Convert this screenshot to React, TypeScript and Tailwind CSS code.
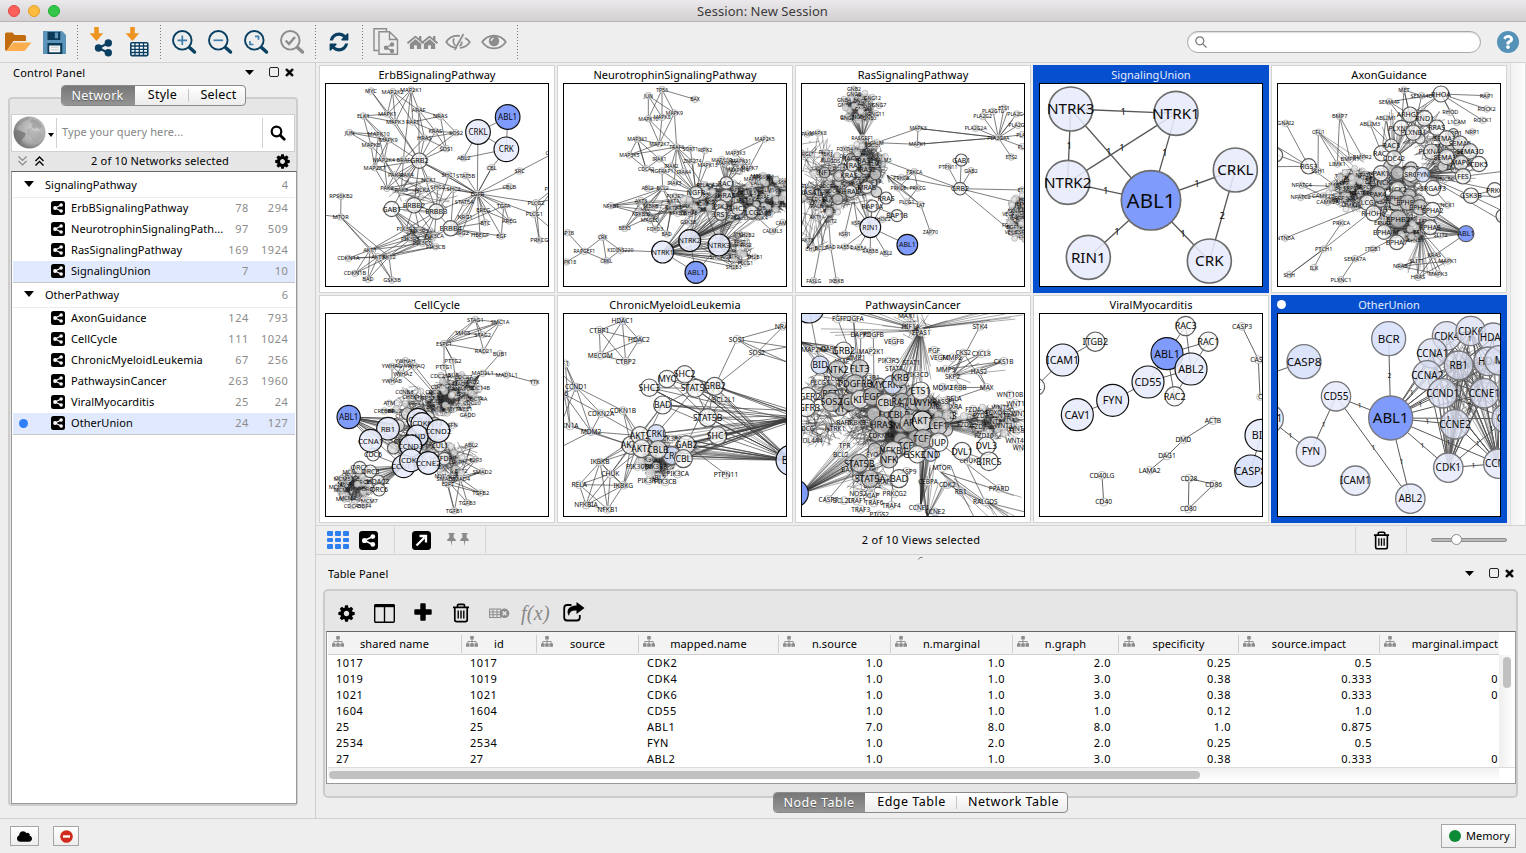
import React from "react";
import { FaCloud, FaHome, FaQuestion, FaTimes } from "react-icons/fa";

/* ---------- network thumbnails ---------- */

type Cloud = { at: [number, number]; size: [number, number]; edges: number; nodes?: number; names?: string; r?: number; tone?: string };
type Fan = { from: [number, number]; at: [number, number]; size: [number, number]; n: number };
type Graph = {
  title: string;
  origin: [number, number];
  nodes: string;
  links?: string;
  clouds?: Cloud[];
  fans?: Fan[];
  marks?: string;
  small?: number;
  mid?: number;
  k?: number;
  ring?: string;
  ringWidth?: number;
  line?: number;
  selected?: boolean;
  current?: boolean;
};

const tones: Record<string, string> = { w: "#f8f8f8", g: "#c9c9c9", l: "#e7ebfa", m: "#d6e0fb", b: "#7f9bfb", s: "#e6e6e6", v: "#dadff2" };

function rng(seed: number) {
  let a = seed;
  return () => {
    a = (a * 1664525 + 1013904223) % 4294967296;
    return a / 4294967296;
  };
}

function inEllipse(rand: () => number, at: [number, number], size: [number, number]): [number, number] {
  const t = rand() * Math.PI * 2;
  const d = Math.sqrt(rand());
  return [at[0] + Math.cos(t) * d * size[0], at[1] + Math.sin(t) * d * size[1]];
}

/* Each entry reads "label x y [radius] [tone]"; a label of "_" leaves the node blank. */
function parse(list: string) {
  return list.split(";").map((s) => s.trim()).filter(Boolean).map((s) => {
    const p = s.split(" ");
    return { label: p[0] === "_" ? "" : p[0], x: +p[1], y: +p[2], r: p[3] ? +p[3] : 10, tone: p[4] || (p[3] ? "w" : "s") };
  });
}

function NetworkDrawing({ g }: { g: Graph }) {
  const rand = rng(g.title.length * 7919 + g.origin[0]);
  const own = parse(g.nodes);
  const find = (t: string): [number, number] => {
    if (t.includes(",")) {
      const [x, y] = t.split(",");
      return [+x, +y];
    }
    const n = own.find((o) => o.label === t);
    return n ? [n.x, n.y] : [g.origin[0], g.origin[1]];
  };
  const lines: number[][] = [];
  const mesh: number[][] = [];
  (g.links || "").split(";").map((s) => s.trim()).filter(Boolean).forEach((s) => {
    const [a, ...rest] = s.split(" ");
    const p = find(a);
    rest.forEach((b) => lines.push([...p, ...find(b)]));
  });
  (g.fans || []).forEach((f) => {
    for (let i = 0; i < f.n; i++) mesh.push([...f.from, ...inEllipse(rand, f.at, f.size)]);
  });
  const extra: ReturnType<typeof parse> = [];
  (g.clouds || []).forEach((c) => {
    for (let i = 0; i < c.edges; i++) mesh.push([...inEllipse(rand, c.at, c.size), ...inEllipse(rand, c.at, c.size)]);
    const names = (c.names || "").split(" ");
    for (let i = 0; i < (c.nodes || 0); i++) {
      const [x, y] = inEllipse(rand, c.at, c.size);
      extra.push({ label: i % 2 ? "" : names[(i / 2) % names.length], x, y, r: c.r || 9, tone: c.tone || "s" });
    }
  });
  const small = g.small || 16;
  const mid = g.mid || 20;
  const k = g.k || 0.65;
  return (
    <svg className="block h-full w-full" viewBox={`${g.origin[0]} ${g.origin[1]} 672 612`} fontFamily="'Noto Sans', sans-serif" textAnchor="middle">
      <g stroke="#333" strokeOpacity="0.8" strokeWidth="1.500">
        {mesh.map((l, i) => (
          <line key={i} x1={l[0]} y1={l[1]} x2={l[2]} y2={l[3]} />
        ))}
      </g>
      <g stroke={g.ring ? "#585858" : "#3c3c3c"} strokeWidth={g.line || 2}>
        {lines.map((l, i) => (
          <line key={i} x1={l[0]} y1={l[1]} x2={l[2]} y2={l[3]} />
        ))}
      </g>
      {[...extra, ...own].map((n, i) => {
        const tiny = n.r <= 14;
        const size = tiny ? small : Math.max(mid, n.r * k);
        return (
          <g key={i}>
            <circle cx={n.x} cy={n.y} r={n.r} fill={tones[n.tone]} fillOpacity={n.tone === "b" ? 1 : n.tone === "l" || n.tone === "m" ? 0.88 : 0.76} stroke={tiny ? "#a2a2a2" : g.ring || (n.r > 29 ? "#111111" : "#5c5c5c")} strokeWidth={tiny ? 2 : g.ringWidth || 3.5} />
            {n.label && <text x={n.x} y={n.y + size * 0.36} fontSize={size} fill="#0a0a0a">{n.label}</text>}
          </g>
        );
      })}
      {parse(g.marks || "").map((m, i) => (
        <text key={i} x={m.x} y={m.y + m.r * 0.36} fontSize={m.r} fill="#111111">{m.label}</text>
      ))}
    </svg>
  );
}

const graphs: Graph[] = [
  {
    title: "ErbBSignalingPathway",
    origin: [27, 189],
    small: 17,
    mid: 22,
    nodes:
      "MYC 165 213;MAP2K2 230 215;MAP2K1 285 210;ELK1 142 288;MAPK1 214 282;ARAF 308 270;NRAS 373 289;MAPK3 238 306;RAF1 290 306;JUN 101 338;MAPK10 188 342;HRAS 325 354;KRAS 358 334;SOS2 420 338;MAPK9 217 360;MAPK8 165 376;SOS1 391 386;MAP2K4 204 419;BRAF 262 419;MAP2K7 176 443;ABL2 443 414 10 v;CBL 527 443;SRC 611 453;PAK1 236 465;PAK4 273 465;NCK1 338 480;SHC1 398 465;STAT5B 449 467;PAK2 213 505;PAK3 256 511;NCK2 318 511;SHC3 365 502;SHC2 413 508;EGFR 484 521;CBLB 580 500;RPS6KB2 75 529;MTOR 74 591;STAT5A 445 547;EREG 502 570;TGFA 563 558;NRG1 447 591;BTC 508 608;HBEGF 492 646;EGF 556 648;AREG 580 603;NRG2 436 640;PIK3R1 270 628;PIK3R3 310 632;PIK3CA 355 647;PIK3R5 283 657;PIK3CD 320 670;PIK3CB 359 680;AKT1 162 690;AKT3 186 710;AKT2 219 710;CDKN1A 97 715;CDKN1B 117 760;BAD 156 778;GSK3B 228 780;PLCG2 660 548;PLCG1 655 583;PRKCG 670 660;PRKCA 712 507;CAMK 712 400;GAB1 227 567 23;ERBB2 294 556 23;ERBB3 361 575 23;ERBB4 404 625 23;GRB2 310 422 23;CRKL 486 336 37 l;ABL1 575 291 37 b;CRK 571 388 37 l",
    links:
      "MYC MAPK1 MAPK3;MAP2K2 MAPK1 MAPK3 ARAF RAF1;MAP2K1 MAPK1 MAPK3 ARAF RAF1 BRAF;ELK1 MAPK1 MAPK3 MAPK8 MAPK9 MAPK10;ARAF NRAS KRAS HRAS;RAF1 NRAS KRAS HRAS;NRAS SOS1 SOS2;KRAS SOS1 SOS2;HRAS SOS1 SOS2 BRAF;JUN MAPK10 MAPK9 MAPK8;MAPK10 MAP2K4 MAP2K7;MAPK9 MAP2K4 MAP2K7;MAPK8 MAP2K4 MAP2K7;GRB2 MAPK1 MAPK3 ARAF SOS1 SOS2 KRAS HRAS MAP2K4 MAP2K7 MAPK10 PAK1 PAK2 PAK3 PAK4 NCK1 SHC1 ERBB2 ERBB3 GAB1 EGFR;PAK1 MAP2K4 MAP2K7 NCK1 NCK2 PAK4;PAK2 MAP2K4 MAP2K7 BRAF NCK1 NCK2;PAK3 BRAF NCK1 NCK2 MAP2K4;EGFR CRKL CBL SRC CBLB SHC1 SHC2 SHC3 STAT5A STAT5B EREG TGFA NRG1 BTC HBEGF EGF AREG NRG2 NCK1 GRB2 ERBB4 ERBB3 PLCG2 PLCG1;CRKL ABL1 CRK ABL2;ABL1 CRK;CRK ABL2 CBL;SRC CAMK;CBL EGFR;RPS6KB2 MTOR;MTOR AKT1 AKT3 AKT2 27,586;AKT1 CDKN1A CDKN1B BAD GSK3B PIK3R1 PIK3R3 PIK3R5 PIK3CD;AKT3 CDKN1A CDKN1B BAD GSK3B PIK3CA PIK3R3 PIK3CB;AKT2 CDKN1A CDKN1B BAD GSK3B PIK3R5 PIK3CD PIK3CB PIK3CA;GAB1 ERBB2 ERBB3 PIK3R1 PIK3R3 PIK3CA PIK3CB PIK3CD PIK3R5;ERBB2 ERBB3 PIK3R1 PIK3R3 PIK3CA SHC3 NCK2;ERBB3 ERBB4 PIK3R1 PIK3R3 PIK3CA PIK3CD SHC2 SHC3 SHC1;ERBB4 EREG BTC HBEGF NRG1 NRG2 STAT5A SHC2 PIK3CA;EREG AREG;TGFA AREG ERBB4;EGF ERBB4 TGFA;PLCG2 PRKCG PRKCA;PLCG1 PRKCG PRKCA 699,620;PLCG2 699,540",
    clouds: [
      { at: [318, 645], size: [60, 28], edges: 38 },
      { at: [320, 530], size: [110, 60], edges: 18 },
    ],
  },
  {
    title: "NeurotrophinSignalingPathway",
    origin: [21, 63],
    small: 15.5,
    mid: 21,
    nodes:
      "JUN 277 101;TP53 318 83;BAX 417 112;MAPK10 277 170;MAPK8 318 166;MAPK9 355 153;MAP3K1 244 232;MAP2K7 310 245;MAP3K5 220 279;TRAF6 362 255;IRAK1 310 291;SORT1 403 260;RIPK2 447 265;MAP2K5 626 231;MAP3K3 538 273;MAPK7 580 317;CDC42 270 320;NGFRAP1 318 327;IRAK2 346 312;IRAK4 383 329;ZNF274 409 298;MAPK13 455 308;MAPKAP 497 293;MAPK12 510 302;MAPK11 555 297;MAPK14 548 325;ABL2 275 379;BCL2 320 379;IRAK3 355 362;RELA 440 368;NFKB1 165 431;AKT3 255 416;NFKBIB 255 455;IKBKB 285 432;MAGED 282 474;BEX3 206 499;FOXO3 297 502;BAD 332 516;AKT1 351 417;AKT2 346 437;NFKBIE 365 454;GSK3B 397 480;RAPGEF1 85 568;AP1B 35 512;MAPK18 30 600;CRK 140 526 10 v;CRKL 151 596 10 v;KIDINS220 193 565;CALML3 649 508;CAMK 680 482;SH2B2 572 520;FRS2 570 550;SHC1 480 585;SH2B1 596 585;SH2B3 533 614;PLCG1 568 604;NGFR 420 392 19 w;RAC1 511 363 19 w;HRAS 511 401 19 w;PIK3 495 433 19 w;IRS1 495 456 19 w;PLCG2 587 450 19 w;SHC2 545 440 19 w;NTRK1 320 570 33 l;NTRK2 401 536 33 l;NTRK3 489 549 33 l;ABL1 420 631 33 b",
    links:
      "JUN MAPK10 MAPK8 MAPK9;TP53 MAPK10 MAPK8 MAPK9 BAX;MAPK10 MAP2K7 TRAF6;MAPK8 MAP2K7;MAPK9 MAP2K7 TRAF6;MAP3K1 MAP2K7 CDC42 IRAK1 MAP3K5;MAP3K5 MAP2K7 TRAF6 CDC42;CDC42 MAP3K1 IRAK1;TRAF6 IRAK1 IRAK2 IRAK3 IRAK4 SORT1 NGFR RELA ZNF274;SORT1 NGFR;RIPK2 NGFR;MAP2K5 MAP3K3 MAPK7;MAP3K3 MAPK7;NGFR ZNF274 MAPK13 IRAK1 IRAK2 IRAK3 IRAK4 NGFRAP1 BCL2;BCL2 ABL2 NFKB1 BEX3 AKT3 NFKBIB IKBKB AKT1 AKT2 NGFRAP1;NFKB1 AKT3 NFKBIB AKT1 NFKBIE;BEX3 NFKBIB AKT3 AKT2;BAD AKT1 AKT2 AKT3;FOXO3 AKT1 AKT2 AKT3;MAGED AKT1 AKT2;RAPGEF1 CRK CRKL AP1B MAPK18;CRK CRKL KIDINS220;CRKL KIDINS220;KIDINS220 NTRK1;NTRK1 ABL1 NTRK2 SHC1;NTRK2 ABL1;NTRK1 SH2B3 FRS2 SH2B2 PLCG1;NTRK2 SH2B3 FRS2 SH2B2 PLCG1 SH2B1;NTRK3 SH2B3 FRS2 SH2B2 PLCG1 SH2B1 ABL1;CALML3 PLCG2 CAMK",
    clouds: [
      { at: [555, 415], size: [170, 62], edges: 190, nodes: 46, names: "MAPK3 KRAS PIK3CA NRAS RPS6KA SOS1 CALM2 RAF1 PIK3R1 CAMK4 MAP2K1" },
      { at: [640, 400], size: [75, 60], edges: 130, nodes: 30, names: "CALM1 RPS6KA2 CALML5 CAMK2B BRAF" },
      { at: [300, 440], size: [80, 40], edges: 22 },
      { at: [415, 430], size: [80, 42], edges: 60, nodes: 12, names: "PIK3R2 AKT1 YWHAE PDK1 PIK3CD" },
      { at: [545, 565], size: [55, 50], edges: 42, nodes: 8, names: "FRS2 SHC3 NTF3 NGF" },
      { at: [540, 310], size: [45, 30], edges: 20 },
      { at: [630, 355], size: [55, 22], edges: 30, nodes: 8, names: "RPS6KA1 MAP2K1 MAPK1" },
    ],
    fans: [
      { from: [401, 536], at: [490, 455], size: [90, 35], n: 30 },
      { from: [320, 570], at: [480, 470], size: [90, 35], n: 24 },
      { from: [489, 549], at: [550, 455], size: [100, 30], n: 20 },
      { from: [510, 365], at: [535, 305], size: [55, 18], n: 16 },
      { from: [320, 570], at: [560, 570], size: [40, 45], n: 9 },
    ],
  },
  {
    title: "RasSignalingPathway",
    origin: [21, 63],
    small: 15.5,
    mid: 21,
    nodes:
      "GNB2 180 82;GNG12 235 107;GNG7 255 130;GNG11 246 155;GNB4 150 113;GNG2 160 167;RASGRF1 205 227;CALM 248 242;MAPK3 372 199;MAPK1 370 247;PLA2G1B 597 148;ETS1 630 138;PLA2G4 668 156;PLA2G2 566 163;PLA2G2A 545 199;PLA2G4A 613 227;PLA2G6 672 190;PLA2 685 218;PLA 685 254;ETS2 652 285;GAB1 502 294 18;GRB2 498 380 19;PTPN11 462 314;GAB2 531 326;PAK6 40 216;MAPK8 72 213;RGL1 42 277;TBK1 98 275;FOXO4 152 262;PLD1 100 293;ETS 684 384;PRKCA 361 329;PRKCB 322 347;PRKCG 371 378;PRKCE 313 378;PLCG1 338 420;LAT 380 428;ZAP70 409 510;KSR1 152 516;KSR2 190 484;RAB5C 152 555;RAB5A 194 557;RAB5B 229 567;ABL2 276 574 10 v;SHOC2 265 472;AKT1 65 466;AKT2 110 478;AKT3 40 533;CHUK 55 560;BCL2 80 558;BAD 110 555;FASLG 59 656;IKBKB 127 656;RRAS 276 408 18;RAP1A 235 432 18;RAP1B 309 461 18;KRAS 165 339 19;NRAS 175 310 18;HRAS 170 388 18;MRAS 218 376 18;RIN1 229 496 31 l;ABL1 340 548 31 b",
    links:
      "MAPK3 MAPK1 CALM 613,227;MAPK1 CALM 613,227;PLA2G4A PLA2G1B ETS1 PLA2G4 PLA2G2 PLA2G2A PLA2G6 PLA2 PLA ETS2 MAPK3 MAPK1 640,150 655,175;GRB2 GAB1 PTPN11 GAB2 ETS 660,420 280,300 290,340 660,515;PRKCA PRKCB PRKCG PRKCE;PRKCG PRKCE PLCG1;LAT ZAP70 PLCG1 PRKCE 280,345;RIN1 RAB5C RAB5A RAB5B ABL2 ABL1 RAP1A RRAS SHOC2;RAP1B SHOC2 RAP1A;FASLG 80,550;IKBKB BAD;BAD 100,420;BCL2 FOXO4;KSR1 175,420;KSR2 180,420",
    clouds: [
      { at: [195, 135], size: [50, 46], edges: 130, nodes: 22, names: "GNG3 GNB1 GNG5 GNB3 GNGT1 GNG8" },
      { at: [218, 310], size: [64, 80], edges: 180, nodes: 44, names: "SOS1 RASA2 CALM3 EGFR KIT PDGFA FGF3 INSR" },
      { at: [100, 400], size: [95, 55], edges: 100, nodes: 34, names: "PIK3CA PAK4 RAC1 RALB CDC42 RAF1" },
      { at: [150, 360], size: [120, 75], edges: 80, nodes: 12, r: 16, tone: "g", names: "NF1 RRAS2 RASA1 RAC2" },
      { at: [684, 470], size: [50, 72], edges: 150, nodes: 44, names: "FGF1 EFNA4 VEGF CSF1 PGF HGF" },
      { at: [62, 265], size: [55, 60], edges: 18 },
      { at: [90, 320], size: [70, 50], edges: 26, nodes: 8, names: "RALGDS PLCE1 RGL2" },
      { at: [65, 480], size: [55, 90], edges: 22 },
    ],
    fans: [
      { from: [205, 227], at: [195, 150], size: [55, 40], n: 24 },
      { from: [205, 227], at: [220, 300], size: [55, 40], n: 20 },
      { from: [40, 560], at: [100, 410], size: [70, 40], n: 10 },
      { from: [110, 478], at: [120, 380], size: [80, 40], n: 12 },
      { from: [280, 340], at: [330, 380], size: [50, 45], n: 9 },
      { from: [229, 496], at: [190, 400], size: [50, 40], n: 8 },
    ],
  },
  {
    title: "SignalingUnion",
    origin: [27, 189],
    selected: true,
    ring: "#6c6c6c",
    ringWidth: 5,
    line: 4,
    k: 0.69,
    nodes: "NTRK3 122 267 66 l;NTRK1 438 280 66 l;NTRK2 113 487 66 l;CRKL 616 450 66 l;RIN1 175 712 66 l;CRK 538 723 66 l;ABL1 363 541 89 b",
    links: "NTRK3 NTRK1 NTRK2 ABL1;NTRK1 NTRK2 ABL1;NTRK2 ABL1;ABL1 CRKL CRK RIN1;CRKL CRK",
    marks: "1 280 274 29;1 118 378 29;1 236 396 29;1 276 384 29;1 404 399 29;1 501 492 29;2 577 587 29;1 227 512 29;1 261 634 29;1 459 640 29",
  },
  {
    title: "AxonGuidance",
    origin: [741, 189],
    small: 17,
    mid: 21,
    k: 0.9,
    nodes:
      "MET 1122 210;SEMA4D 1175 227;SEMA4F 1078 245;RAP1 1370 227;ROCK2 1370 267;ROCK1 1358 301;RHOD 1261 277;L1CAM 1280 307;NRP1 1327 336;ABLIM1 1068 295;ABLIM3 1020 312;BMP7 929 289;GNAI2 767 310;CFL1 865 337;RGS3 836 439 23;SSH1 864 453;LIMK1 922 432;BMPR2 997 411;BMPR1 960 418;NFATC4 815 496;NFATC2 812 532;CAMK2B 880 528;CAMK2A 893 547;NTN5A 766 654;PTCH1 881 687;PRKCA 934 609;SHH 778 764;ILK 852 743;SEMA7A 975 716;PLXNC1 933 779;ITGB1 1029 687;NRAS 1111 739;SLIT1 1160 722;HRAS 1164 772;MAPK3 1224 762;KRAS 1213 706;MAPK1 1253 723;SLIT2 1232 645;NCK1 1253 555;UNC5C 1245 478;RHOA 1233 222 24;ARHGEF 1140 284 23;RND1 1184 295 23;RRAS 1220 323 23;PLXNB2 1114 324 23;PLXNB1 1150 338 23;SEMA3A 1250 355 23;SEMA5 1290 371 23;SEMA3D 1320 394 23;RAC2 1055 400 23;RAC3 1084 377 20;CDC42 1092 415 23;PLXNA1 1204 395 23;SEMA3F 1250 411 23;MAPG 1293 428 22;CDK5 1347 432 23;FES 1299 469 23;SRGAP3 1209 504 23;GSK3B 1323 527 23;PRKC 1394 510 22;PAK1 1053 460 23;SRC 1142 462 23;FYN 1178 464 22 m;NCK2 1103 508 23;PAK4 1044 522 23 g;EPHB1 1100 534 23 g;LCG 1012 548 23;RHOH6 1030 580 23;EPHB6 1132 548 23 g;EPHA3 1170 562 23 g;EPHA2 1208 570 23;EPHB2 1105 597 26 g;EPHA1 1062 636 22;EPHAS 1200 622 22;EPHA7 1100 667 22;_ 738 405 20;_ 1418 588 20;ABL1 1308 641 24 b",
    links:
      "RHOA RAP1 ROCK2 ROCK1 RHOD L1CAM ARHGEF PLXNB2;MET SEMA4D PLXNB1 ARHGEF PLXNB2;SEMA4F ARHGEF PLXNB1 RHOA;SEMA4D PLXNB1 RHOA;ABLIM1 RAC3 CDC42 RAC2;ABLIM3 RAC3 RAC2;BMP7 BMPR2 BMPR1 LIMK1;GNAI2 RGS3;CFL1 SSH1 LIMK1 BMPR1;RGS3 741,405 741,440 741,380 RHOH6;NFATC4 960,500 CAMK2B;NFATC2 CAMK2B 960,480;NTN5A 1000,560;PTCH1 SHH ILK 1030,570 PRKCA;SEMA7A PLXNC1 ITGB1;ITGB1 1100,650;SHH PTCH1;UNC5C FYN SRC;NCK1 SRGAP3 EPHB1;FES MAPG FYN CDK5 1412,455;CDK5 SEMA3F FYN;GSK3B 1412,530 1412,570 FYN PRKC;PRKC FYN;FYN 1412,600 CDK5 MAPG SEMA3D;ABL1 SLIT2 EPHAS EPHA2 EPHA3 EPHB2 EPHA1 EPHA7 EPHB6 KRAS;HRAS 1170,650;MAPK3 1170,640;MAPK1 1180,640;NRAS SLIT1 KRAS MAPK1 MAPK3;HRAS SLIT1 KRAS MAPK1",
    clouds: [
      { at: [975, 510], size: [80, 70], edges: 150, nodes: 40, names: "NFATC3 PPP3CA LIMK2 TRPC6 EPHB3 CXCR4" },
      { at: [1100, 500], size: [85, 85], edges: 150, nodes: 16, r: 19, tone: "g", names: "PAK2 NCK EFNA4 RASA1" },
      { at: [1125, 620], size: [80, 50], edges: 150, nodes: 20, names: "EFNA2 EFNB1 NTN1 EFNA5" },
      { at: [1240, 400], size: [90, 70], edges: 70, nodes: 12, r: 15, names: "SEMA3C PLXNA2 NRP1" },
      { at: [1170, 320], size: [80, 70], edges: 36 },
    ],
    fans: [
      { from: [1178, 464], at: [1280, 430], size: [80, 70], n: 30 },
      { from: [1092, 415], at: [1130, 310], size: [90, 50], n: 26 },
      { from: [1308, 641], at: [1150, 590], size: [60, 40], n: 14 },
      { from: [1175, 640], at: [1180, 740], size: [65, 30], n: 15 },
      { from: [1053, 460], at: [960, 500], size: [80, 60], n: 26 },
      { from: [865, 337], at: [985, 450], size: [30, 30], n: 3 },
    ],
  },
  {
    title: "CellCycle",
    origin: [27, 63],
    small: 17,
    mid: 21,
    k: 0.7,
    nodes:
      "STAG1 478 83;SMC1A 552 91;SMC3 440 124;STAG2 500 128;ESPL1 384 155;RAD21 503 176;BUB1 552 185;PTTG2 411 207;PTTG1 384 226;YWHAH 268 206;YWHAG 228 223;YWHAQ 296 222;YWHAZ 260 245;YWHAB 228 268;CDC25A 375 251;MAD2L1 500 244;MAD1L1 572 249;TTK 656 271;CDC14B 490 289;CDC14A 482 322;CCNB3 265 300;ATM 220 334;CREBBP 205 357;MYT1 415 350;WEE1 447 350;GADD 455 369;SFN 410 400;ABL2 466 459;E2F3 479 503;SMAD2 499 539;SMAD4 433 560;SMAD3 390 562;E2F1 396 577;TGFB2 494 603;TGFB3 454 632;TGFB1 415 656;MCM6 105 540;MCM5 78 560;MCM3 78 594;MCM2 95 619;MCM7 160 626;CDC45 110 641;DBF4 145 641;CDC6 171 488 19;ORC1 131 527 19;ORC3 163 538 19;HDAC2 186 568 19;ORC6 189 593 19;CUL1 372 461 19;TFDP 385 500 19;ABL1 98 375 35 b;RB1 216 410 34 l;CCNA1 164 446 34 l;CDK4 306 382 33 l;CDK6 318 395 33 l;CCND1 304 432 33 l;CCND3 284 462 33 l;CCND2 367 417 34 l;CCNE1 263 523 34 l;CDK2 285 505 34 l;CCNE2 337 513 34 l",
    links:
      "STAG1 SMC1A SMC3 STAG2 RAD21 ESPL1;SMC1A SMC3 STAG2 RAD21 ESPL1;ESPL1 SMC3 STAG2 RAD21 PTTG2 PTTG1 420,115;PTTG2 ESPL1 420,270;PTTG1 400,270;SMC3 STAG2;BUB1 MAD2L1;MAD2L1 MAD1L1;MAD1L1 TTK;YWHAH YWHAG YWHAQ YWHAZ YWHAB 350,300;YWHAG YWHAQ YWHAB 340,320;YWHAQ YWHAB 350,290;ABL1 216,400 RB1 CCNA1 CDK4 CCND1 CCND3 CCNE1 CDK2 CCND2 240,380 250,400;ABL2 SMAD4;E2F3 SMAD4 SMAD3 385,500 370,520;SMAD2 SMAD4 SMAD3 E2F1 385,480;SMAD4 TGFB1 TGFB2 TGFB3 E2F1;SMAD3 TGFB1 TGFB2 TGFB3;E2F1 TGFB1 TGFB2;CCNE1 ORC1 ORC3 HDAC2 ORC6 CDC6 MCM6;CDC6 RB1 CCNA1",
    clouds: [
      { at: [375, 330], size: [52, 44], edges: 180, nodes: 10, names: "CCNB1 PKMYT1 PLK1 CDC25C" },
      { at: [420, 300], size: [75, 55], edges: 90, nodes: 28, names: "ANAPC4 CDC20 CDC27 BUB3 MAD2" },
      { at: [112, 588], size: [54, 46], edges: 160, nodes: 22, names: "ORC2 MCM4 ORC5 CDC7" },
      { at: [290, 330], size: [60, 50], edges: 50, nodes: 12, names: "CHEK1 TP53 CDC25B" },
      { at: [300, 440], size: [90, 80], edges: 140, nodes: 12, r: 18, names: "E2F4 CDKN2 RBL1" },
      { at: [395, 510], size: [50, 60], edges: 50, nodes: 16, names: "E2F2 SKP1 RBX1 MYC" },
      { at: [440, 480], size: [50, 40], edges: 18 },
    ],
    fans: [
      { from: [98, 375], at: [270, 450], size: [50, 80], n: 12 },
      { from: [263, 523], at: [130, 580], size: [50, 50], n: 18 },
      { from: [490, 250], at: [410, 310], size: [60, 50], n: 18 },
      { from: [205, 357], at: [310, 370], size: [60, 50], n: 7 },
      { from: [385, 255], at: [380, 330], size: [40, 30], n: 12 },
      { from: [425, 560], at: [390, 480], size: [40, 40], n: 14 },
    ],
  },
  {
    title: "ChronicMyeloidLeukemia",
    origin: [21, 63],
    small: 20,
    mid: 26,
    nodes:
      "HDAC1 199 87 12 v;CTBP1 130 115 12;HDAC2 249 143 12 v;MECOM 133 190 12;CTBP2 209 208 12;SOS1 543 142 12;SOS2 603 182 12;NRAS 682 103 12;F1 28 216 12;CCND1 60 285 12 v;K6 24 306 12 v;CDKN2A 135 365 12;CDKN1B 201 356 12;KN1A 42 402 12;MDM2 105 419 12 v;IKBKB 132 510 12;CHUK 163 546 12;RELA 70 578 12;IKBKG 202 580 12;NFKBIA 90 639 12;NFKB1 155 652 12;PIK3R1 278 566 12;PIK3CB 328 570 12;PIK3CA 365 546 12;PIK3CD 245 524 12;PIK3R3 300 524 12;PIK3R2 345 440 12;BCL2L1 503 323 12;PTPN11 510 548 12;SHC3 280 287 26;MYC 333 261 26;SHC2 386 247 26;STAT5A 418 289 27;GRB2 476 283 27;BAD 320 339 27;STAT5B 455 377 27;SHC1 485 431 27;AKT1 225 460 27;AKT2 252 431 27;AKT3 257 470 27;CRKL 301 425 27 m;GAB2 391 458 27;CRK 347 491 27 m;CBLB 306 473 27;CBL 382 500 27;BCR 706 505 46 m",
    links:
      "HDAC1 CTBP1 HDAC2 MECOM CTBP2;CTBP1 HDAC2 MECOM CTBP2;HDAC2 MECOM CTBP2;MECOM CTBP2;SOS1 SOS2 NRAS GRB2 693,165 693,210;SOS2 NRAS GRB2 693,165 693,210;CCND1 CDKN2A F1 K6 MDM2 CDKN1B 21,250 21,380;K6 CDKN2A KN1A MDM2 21,350;CDKN2A MDM2 AKT2;CDKN1B AKT1 AKT2 AKT3;KN1A AKT1 MDM2;MDM2 AKT1 AKT2 21,462;F1 21,230 60,300 KN1A;IKBKB CHUK RELA IKBKG NFKBIA NFKB1 AKT1 AKT3 AKT2;CHUK RELA IKBKG NFKBIA NFKB1 AKT1 AKT3 AKT2;RELA IKBKG NFKBIA NFKB1;IKBKG NFKBIA NFKB1 AKT1 AKT2 AKT3;NFKBIA NFKB1;BAD AKT1 AKT2 AKT3 STAT5A 693,380;PTPN11 GAB2;SHC3 STAT5A BCR 693,380 STAT5B;MYC STAT5A STAT5B GRB2;SHC2 GRB2 BCR 693,360;GRB2 693,350 693,358 693,366 BCR 660,480 STAT5B GAB2;STAT5A STAT5B BCR BCL2L1 CRKL;BCL2L1 STAT5B STAT5A BCR;STAT5B 693,372 BCR 693,392;SHC1 693,378 BCR GAB2 693,390;GAB2 693,385 BCR;CBL BCR 693,380 693,394;CBLB BCR 693,385;CRKL 693,375 BCR 693,383;CRK BCR 693,388;BAD 693,355 693,372 BCR;BCR CRK CRKL STAT5A SHC3",
    clouds: [
      { at: [305, 500], size: [60, 62], edges: 190, nodes: 8, r: 14, names: "PIK3CG ABL2" },
      { at: [280, 460], size: [75, 40], edges: 60 },
    ],
    fans: [
      { from: [706, 505], at: [370, 470], size: [60, 30], n: 10 },
      { from: [720, 375], at: [380, 460], size: [70, 45], n: 16 },
      { from: [706, 505], at: [450, 320], size: [60, 40], n: 5 },
    ],
  },
  {
    title: "PathwaysinCancer",
    origin: [21, 63],
    small: 19.5,
    mid: 27,
    nodes:
      "FGF 131 81 12;PDGFA 178 81 12;DAPK3 200 128 12;PDGFB 238 128 12;VEGFB 300 148 12;MAX1 338 72 12;HIF1A 350 103 12;EPAS1 382 121 12;STK4 558 103 12;PGF 420 175 12;MAP2K2 60 173 12;DAPK1 112 170 12;MAP2K1 232 178 12;MMP1 185 198 12;ARAF 142 209 12;PIK3R5 284 207 12;STAT1 352 212 12;STAT3 300 230 12;PIK3CD 370 247 12;VEGFC 438 197 12;MMP2 475 197 12;CKS2 508 183 12;CXCL8 562 185 12;CKS1B 629 208 12;MMP9 455 232 12;SKP2 476 254 12;HAS2 555 238 12;MDM2 446 286 12 v;ERBB 493 287 12;MAX 578 286 12;PLCG1 78 273 12;PLCG2 118 261 12;PIK3R1 225 256 12;WNT10B 648 308 12;WNT1 665 334 12;WNT6 680 365 12;RASSF1 450 328 12;FZD1 537 352 12;FZD3 560 372 12;FOXO1 605 361 12;FZD2 512 398 12;FZD7 555 405 12;WNT3 628 402 12;WNT2 672 410 12;FZD10 570 430 12;WNT4 662 446 12;WNT 678 466 12;NTRK1 123 410 12 v;RAF1 150 391 12;IKBKB 188 391 12;CDKN1A 262 432 12;DCC 40 410 12;COL4A4 50 445 12;TPR 152 460 12;BCL2 140 488 12;FYO 235 488 12;BAX 160 532 12;TPV5 222 528 12;BIRC2 236 580 12;CASP9 338 538 12;TRAF 265 568 12;NOS2 192 604 12;XIAP 235 610 12;CASP7 103 622 12;BCL2L1 150 626 12;TRAF1 188 627 12;TRAF3 200 652 12;TRAF6 240 633 12;TRAF4 292 640 12;PRKCG2 302 605 12;PTGS2 256 668 12;CEBPA 402 570 12;MTOR 443 528 12;CDK2 460 578 12 v;RB1 500 598 12 v;CCNE1 375 647 12 v;CCNE2 423 660 12 v;PPARD 615 589 12;RALGDS 574 630 12;CHUK 523 507 12;BID 78 219 27 m;GRB2 149 175 25;NTK2 130 232 26 g;FLT3 197 230 27 g;RET 108 305 27 g;PDGFRB 183 276 28 g;EGFR2 40 313 27;EGFR3 38 347 27;SOS2 112 330 28 g;IGF1 168 330 26 g;KIT 198 322 27;EGF 235 313 27 g;CRKL 295 278 28 m;KRB 318 257 25 g;CBL 275 333 28;RAC1 325 330 26 g;PLD 340 345 25 g;JUN 362 330 25 g;WYK 388 333 25 g;ETS1 380 297 27;HRAS 262 399 27 g;CBLB 315 368 26 g;AR 345 393 27 g;AKT1 385 387 30;LEF1 433 402 27 g;TCF1 388 440 28 g;TCF 335 462 25 g;JUP 434 451 28;NFKB1 297 476 28;NFK 285 502 26 g;GSK3B 370 487 26;DVL1 504 478 27;DVL3 577 462 27;BIRC5 585 508 28;STAT5B 196 514 27 g;STAT5A 228 560 26 g;BAD 315 560 27;CND 410 488 20 m;_ 45 48 45 m;_ 2 604 41 b",
    links:
      "45,50 BID;STK4 SKP2;CKS2 SKP2 MMP9 MAX;CXCL8 MMP9 SKP2;CKS1B SKP2 HAS2 MMP9;MAX HAS2 493,287 420,340;PPARD JUP;RALGDS 520,520 693,660 RB1 480,560;RB1 470,520 CDK2 540,675;FGF 131,63 190,240;PDGFA 190,230 200,250;DAPK3 200,240;PDGFB 240,280;CASP7 190,520;TRAF4 300,500;BIRC5 DVL1;CHUK DVL1",
    clouds: [
      { at: [300, 380], size: [170, 115], edges: 330, nodes: 20, r: 20, tone: "g", names: "TP53 SMAD PIK3 FOS MYC" },
      { at: [310, 410], size: [80, 55], edges: 260 },
      { at: [420, 350], size: [80, 50], edges: 80, nodes: 14, r: 11, names: "MMP RXRA PPARG CDK4 RELA" },
      { at: [600, 390], size: [100, 55], edges: 110, nodes: 14, r: 11, names: "WNT5A FZD4 WNT7 FZD8" },
      { at: [150, 300], size: [130, 75], edges: 90 },
      { at: [70, 400], size: [90, 70], edges: 60 },
      { at: [370, 100], size: [55, 45], edges: 20 },
      { at: [230, 560], size: [80, 70], edges: 36 },
    ],
    fans: [
      { from: [21, 604], at: [240, 470], size: [110, 70], n: 36 },
      { from: [380, 640], at: [400, 480], size: [30, 60], n: 24 },
      { from: [380, 110], at: [350, 260], size: [70, 70], n: 30 },
      { from: [380, 110], at: [550, 70], size: [180, 20], n: 9 },
      { from: [380, 115], at: [200, 80], size: [190, 60], n: 14 },
      { from: [440, 540], at: [590, 640], size: [120, 60], n: 7 },
      { from: [475, 250], at: [540, 220], size: [100, 70], n: 8 },
      { from: [21, 150], at: [150, 230], size: [80, 80], n: 16 },
      { from: [433, 402], at: [600, 390], size: [90, 55], n: 36 },
      { from: [400, 675], at: [420, 540], size: [60, 60], n: 14 },
      { from: [580, 630], at: [640, 675], size: [50, 15], n: 7 },
    ],
  },
  {
    title: "ViralMyocarditis",
    origin: [27, 63],
    small: 20,
    mid: 27,
    k: 0.67,
    line: 2.4,
    nodes:
      "CASP3 636 103 12;CASP 685 203 12;C 690 315 10;ACTB 549 386 12;DMD 460 443 12;DAG1 411 492 12;LAMA2 359 535 12;CD40LG 216 550 12;CD40 221 630 12;CD28 477 559 12;CD86 551 577 12;CD80 475 651 12;ITGB2 196 149 29;RAC3 467 102 29;RAC1 535 149 29;RAC2 434 313 29;AL 18 284 26;ICAM1 98 204 48 l;ABL1 411 185 48 b;ABL2 483 231 48 l;CD55 354 270 48 l;FYN 248 325 48 l;CAV1 142 368 48 l;BID 693 430 48 l;CASP8 662 537 48 m",
    links: "ICAM1 ITGB2 AL;ABL1 RAC3 RAC1 RAC2 CD55 ABL2;ABL2 RAC3 RAC1 RAC2 CD55;FYN CD55 CAV1;ACTB DMD;DMD DAG1;DAG1 LAMA2;CD40LG CD40;CD28 CD86 CD80;CD86 CD80;CASP3 CASP;CASP C;BID CASP8",
  },
  {
    title: "OtherUnion",
    origin: [741, 63],
    selected: true,
    current: true,
    ring: "#77777c",
    ringWidth: 4,
    line: 3,
    k: 0.68,
    mid: 30,
    nodes:
      "_ 716 380 44 l;CASP8 822 209 51 m;BCR 1076 140 51 m;CD55 918 313 44 l;FYN 843 479 44 l;ICAM1 976 566 44 l;ABL2 1141 620 44 l;CDK4 1250 132 43 v;CDK6 1322 117 44 v;HDAC 1390 137 44 v;CCNA1 1207 184 44 v;HDA 1375 208 43 v;M 1408 205 44 v;RB1 1286 220 43 v;CCNA2 1192 250 44 v;CCND1 1238 304 44 v;CCNE1 1363 304 44 v;CCNE2 1275 397 44 v;CCN 1430 380 44 v;CDK1 1255 527 44 l;CCNB 1405 515 44 l;ABL1 1082 378 66 b",
    links:
      "ABL1 BCR CD55 ABL2 CDK1 CCNA1 CCNA2 CCND1 CCNE1 CCNE2 CCN CCNB RB1 CDK6 CDK4 HDA M HDAC;CD55 FYN ABL2;FYN 716,380;CASP8 741,238;CDK1 CCNB RB1 CCNE2 CCND1 CCNE1 CCNA1 CDK6 HDAC M CCN HDA CCNA2 CDK4;CCNB CDK6 RB1 HDAC CCND1 CCNE1 CCNE2 HDA CCNA2 CDK4 M;CCN RB1 CDK6 CCND1 CCNA1 CDK4;RB1 CDK6 CDK4 CCNA1 CCNA2 HDA M CCND1 CCNE1 CCNE2 HDAC;CDK6 CCNA1 CCNA2 CCNE1 CCNE2 HDA CDK4;CCNA1 CCND1 CCNE1 CCNE2;CCNA2 CCNE1 M",
    clouds: [{ at: [1320, 260], size: [90, 130], edges: 50 }],
    fans: [
      { from: [1405, 515], at: [1330, 300], size: [60, 100], n: 14 },
      { from: [1255, 527], at: [1280, 300], size: [60, 110], n: 12 },
    ],
    marks:
      "1 748 380 30;2 1078 252 20;1 989 342 20;1 881 397 20;1 781 431 20;1 1030 467 20;1 1115 509 20;1 1177 461 20;1 1192 389 20;1 1255 452 20;1 1330 522 20;1 1343 455 20;1 1171 338 20;1 1145 303 20;1 1255 380 20;1 1320 355 20;2 1318 330 20;1 1384 410 20;1 1320 140 20",
  },
];

function Tile({ g }: { g: Graph }) {
  return (
    <div className={`relative flex h-[228px] w-[236px] flex-col px-[6px] ${g.selected ? "bg-[#0650d0]" : "bg-white outline outline-1 -outline-offset-1 outline-[#d3d3d3]"}`}>
      {g.current && <span className="absolute left-[6px] top-[5px] size-[9px] rounded-full bg-white" />}
      <div className={`flex h-[18px] items-center justify-center pt-[1px] text-[11px] leading-none tracking-[0.030px] ${g.selected ? "text-[#e6edfc]" : "text-black"}`}>{g.title}</div>
      <div className="relative h-[204px] w-[224px] overflow-hidden bg-white">
        <NetworkDrawing g={g} />
        <div className="pointer-events-none absolute inset-0 border border-black" />
      </div>
    </div>
  );
}

/* ---------- icons ---------- */

function Gear({ className }: { className: string }) {
  return (
    <svg className={className} viewBox="0 0 1792 1792" fill="currentColor">
      <path d="M1152 896q0-106-75-181t-181-75-181 75-75 181 75 181 181 75 181-75 75-181zm512-109v222q0 12-8 23t-20 13l-185 28q-19 54-39 91 35 50 107 138 10 12 10 25t-9 23q-27 37-99 108t-94 71q-12 0-26-9l-138-108q-44 23-91 38-16 136-29 186-7 28-36 28h-222q-14 0-24.500-8.500t-11.500-21.500l-28-184q-49-16-90-37l-141 107q-10 9-25 9-14 0-25-11-126-114-165-168-7-10-7-23 0-12 8-23 15-21 51-66.500t54-70.500q-27-50-41-99l-183-27q-13-2-21-12.500t-8-23.500v-222q0-12 8-23t19-13l186-28q14-46 39-92-40-57-107-138-10-12-10-24 0-10 9-23 26-36 98.500-107.500t94.500-71.500q13 0 26 10l138 107q44-23 91-38 16-136 29-186 7-28 36-28h222q14 0 24.500 8.500t11.500 21.500l28 184q49 16 90 37l142-107q9-9 24-9 13 0 25 10 129 119 165 170 7 8 7 22 0 12-8 23-15 21-51 66.500t-54 70.500q26 50 41 98l183 28q13 2 21 12.500t8 23.500z" />
    </svg>
  );
}

function Refresh({ className }: { className: string }) {
  return (
    <svg className={className} viewBox="0 0 1792 1792" fill="currentColor">
      <path d="M1639 1056q0 5-1 7-64 268-268 434.500t-478 166.500q-146 0-282.500-55t-243.500-157l-129 129q-19 19-45 19t-45-19-19-45v-448q0-26 19-45t45-19h448q26 0 45 19t19 45-19 45l-137 137q71 66 161 102t187 36q134 0 250-65t186-179q11-17 53-117 8-23 30-23h192q13 0 22.500 9.500t9.500 22.500zm25-800v448q0 26-19 45t-45 19h-448q-26 0-45-19t-19-45 19-45l138-138q-148-137-349-137-134 0-250 65t-186 179q-11 17-53 117-8 23-30 23h-199q-13 0-22.500-9.500t-9.500-22.500v-7q65-268 270-434.500t480-166.500q146 0 284 55.500t245 156.500l130-129q19-19 45-19t45 19 19 45z" />
    </svg>
  );
}

function ShareSquare({ className }: { className: string }) {
  return (
    <svg className={className} viewBox="0 0 20 20">
      <rect width="20" height="20" rx="3.600" fill="#000" />
      <path d="M14.500 5.800 5.800 10l8.700 4.200" stroke="#fff" strokeWidth="1.700" fill="none" />
      <circle cx="14.500" cy="5.800" r="2.500" fill="#fff" />
      <circle cx="5.800" cy="10" r="2.700" fill="#fff" />
      <circle cx="14.500" cy="14.200" r="2.500" fill="#fff" />
    </svg>
  );
}

function Hierarchy({ className }: { className: string }) {
  return (
    <svg className={className} viewBox="0 0 12 11" fill="currentColor">
      <rect x="4.200" y="0" width="3.600" height="3.600" rx=".6" />
      <rect x="0" y="7.200" width="3.600" height="3.600" rx=".6" />
      <rect x="4.200" y="7.200" width="3.600" height="3.600" rx=".6" />
      <rect x="8.400" y="7.200" width="3.600" height="3.600" rx=".6" />
      <path d="M6 3.500v4M1.800 7.500V5.500h8.400v2" stroke="currentColor" strokeWidth=".9" fill="none" />
    </svg>
  );
}

function Pushpin({ className }: { className: string }) {
  return (
    <svg className={className} viewBox="0 0 9 13" fill="currentColor">
      <path d="M1.500 0h6v1.300h-.9v3.500Q8.900 5.900 8.900 8H5.200L4.500 13 3.800 8H.1Q.1 5.900 2.400 4.800V1.300h-.9z" />
    </svg>
  );
}

function Trash({ className }: { className: string }) {
  return (
    <svg className={className} viewBox="0 0 18 20" fill="none" stroke="#000" strokeWidth="1.700">
      <path d="M1 4.300h16M5.500 4V2.600Q5.500 1.300 6.800 1.300h4.400q1.300 0 1.300 1.300V4M2.800 4.500v12.300q0 1.900 1.900 1.900h8.600q1.900 0 1.900-1.900V4.500" />
      <path d="M6.200 7.500v8M9 7.500v8M11.800 7.500v8" strokeWidth="1.400" />
    </svg>
  );
}

function Magnifier({ tone, children }: { tone: string; children: React.ReactNode }) {
  return (
    <svg className="h-[26px] w-[26px]" viewBox="0 0 26 26" fill="none">
      <circle cx="11.300" cy="11.300" r="9.300" stroke={tone} strokeWidth="1.900" />
      <path d="m18.500 18.500 5 4.500" stroke={tone} strokeWidth="3.400" strokeLinecap="round" />
      {children}
    </svg>
  );
}

function FloppyDisk() {
  return (
    <svg className="h-[23px] w-[23px]" viewBox="0 0 23 23">
      <path d="M0 0h19l4 4v19H0z" fill="#5c93b8" />
      <path d="M4.500 1h12.800v8H4.500zM4.500 12h14.800v11H4.500z" fill="#0a3a58" />
      <path d="M11.800 1.500h3.300v5.800h-3.300z" fill="#5c93b8" />
      <path d="M6.200 14.500h11v6.800h-11z" fill="#f4f4f4" />
      <path d="M8 15.800h7.500v1H8zM8 18.300h7.500v1H8z" fill="#c3cdd4" />
    </svg>
  );
}

function ImportArrow() {
  return <path d="M5.200 0h4.600v6.300h4.400L7.500 14 .6 6.300h4.600z" fill="#ee9421" />;
}

function Slot({ children }: { children: React.ReactNode }) {
  return <div className="flex h-[40px] w-[36px] items-center justify-center">{children}</div>;
}

function DotRule({ className }: { className: string }) {
  return (
    <div className={`flex h-[40px] items-center justify-center ${className}`}>
      <span className="h-[34px] w-px bg-[repeating-linear-gradient(to_bottom,#777_0_1px,transparent_1px_3px)]" />
    </div>
  );
}

function PanelButtons() {
  return (
    <div className="flex items-center">
      <svg className="h-[5px] w-[9px]" viewBox="0 0 9 5"><path d="M0 0h9L4.500 5z" /></svg>
      <span className="ml-[15px] size-[10px] rounded-[2px] border border-[#222]" />
      <FaTimes className="ml-[5px] size-[11px]" stroke="#000" strokeWidth="30" />
    </div>
  );
}

/* ---------- data ---------- */

const tree = [
  { name: "SignalingPathway", count: 4, rows: [["ErbBSignalingPathway", 78, 294], ["NeurotrophinSignalingPath...", 97, 509], ["RasSignalingPathway", 169, 1924], ["SignalingUnion", 7, 10]] },
  { name: "OtherPathway", count: 6, rows: [["AxonGuidance", 124, 793], ["CellCycle", 111, 1024], ["ChronicMyeloidLeukemia", 67, 256], ["PathwaysinCancer", 263, 1960], ["ViralMyocarditis", 25, 24], ["OtherUnion", 24, 127]] },
] as { name: string; count: number; rows: [string, number, number][] }[];

const columns = ["shared name", "id", "source", "mapped.name", "n.source", "n.marginal", "n.graph", "specificity", "source.impact", "marginal.impact"];
const cols = "grid grid-cols-[134px_75px_102px_140px_112px_122px_106px_120px_141px_119px]";
const rows = [
  ["1017", "1017", "", "CDK2", "1.0", "1.0", "2.0", "0.25", "0.5", ""],
  ["1019", "1019", "", "CDK4", "1.0", "1.0", "3.0", "0.38", "0.333", "0"],
  ["1021", "1021", "", "CDK6", "1.0", "1.0", "3.0", "0.38", "0.333", "0"],
  ["1604", "1604", "", "CD55", "1.0", "1.0", "1.0", "0.12", "1.0", ""],
  ["25", "25", "", "ABL1", "7.0", "8.0", "8.0", "1.0", "0.875", ""],
  ["2534", "2534", "", "FYN", "1.0", "2.0", "2.0", "0.25", "0.5", ""],
  ["27", "27", "", "ABL2", "1.0", "1.0", "3.0", "0.38", "0.333", "0"],
];

/* ---------- panels ---------- */

function TitleBar() {
  return (
    <div className="flex h-[22px] items-center border-b border-[#b9b3b6] bg-linear-to-b from-[#ebe9eb] to-[#d3cfd2] pl-[8px]">
      <div className="flex w-[60px] gap-[8px]">
        <span className="size-[12px] rounded-full border border-[#e2463f] bg-[#fc605b]" />
        <span className="size-[12px] rounded-full border border-[#dfa023] bg-[#fdbc40]" />
        <span className="size-[12px] rounded-full border border-[#1dac2c] bg-[#34c84a]" />
      </div>
      <div className="flex-1 pr-[69px] pt-px text-center text-[13px] leading-none tracking-[0.050px] text-[#3b3b3b]">Session: New Session</div>
    </div>
  );
}

function Toolbar() {
  return (
    <div className="flex h-[41px] items-center border-b border-[#d2d2d2]">
      <Slot>
        <svg className="h-[20px] w-[27px]" viewBox="0 0 27 20">
          <path d="M0 18V2q0-1.500 1.500-1.500h6L9.500 3h10q1.500 0 1.500 1.500V9H8.500L1.500 19z" fill="#c06c0f" />
          <path d="M8.500 10.500H26.500L20.500 18q-.8 1-2 1H1.300z" fill="#fcae4f" />
        </svg>
      </Slot>
      <Slot><FloppyDisk /></Slot>
      <DotRule className="w-[11px]" />
      <Slot>
        <svg className="h-[30px] w-[24px]" viewBox="0 0 24 30">
          <ImportArrow />
          <path d="M19.500 16 9.500 21l10 5" stroke="#0a3f62" strokeWidth="2.200" fill="none" />
          <circle cx="19.300" cy="16" r="3.700" fill="#0a3f62" /><circle cx="9.500" cy="21" r="3.700" fill="#0a3f62" /><circle cx="19.300" cy="25.700" r="3.700" fill="#0a3f62" />
        </svg>
      </Slot>
      <Slot>
        <svg className="h-[30px] w-[24px]" viewBox="0 0 24 30">
          <ImportArrow />
          <rect x="5.800" y="15.800" width="17" height="12.800" rx="1" fill="#fff" stroke="#0a3f62" strokeWidth="1.600" />
          <path d="M6 19h17M6 22.300h17M6 25.500h17M10 16v13M14.300 16v13M18.500 16v13" stroke="#0a3f62" strokeWidth="1.300" />
        </svg>
      </Slot>
      <DotRule className="w-[11px]" />
      <Slot><Magnifier tone="#0a3f62"><path d="M6.500 11.300h9.600M11.300 6.500v9.600" stroke="#3e7fb0" strokeWidth="1.700" /></Magnifier></Slot>
      <Slot><Magnifier tone="#0a3f62"><path d="M6.500 11.300h9.600" stroke="#3e7fb0" strokeWidth="1.700" /></Magnifier></Slot>
      <Slot><Magnifier tone="#0a3f62"><path d="M12 7.300h3.500v3.500M7 12v3.500h3.500" stroke="#3e7fb0" strokeWidth="1.700" /></Magnifier></Slot>
      <Slot><Magnifier tone="#8c8c8c"><path d="m6.700 11.500 3.300 3.500 6-7" stroke="#8c8c8c" strokeWidth="2.500" /></Magnifier></Slot>
      <DotRule className="w-[11px]" />
      <Slot><Refresh className="size-[22px] text-[#0a3f62]" /></Slot>
      <DotRule className="w-[11px]" />
      <Slot>
        <svg className="h-[28px] w-[26px]" viewBox="0 0 26 28" fill="none" stroke="#8c8c8c" strokeWidth="1.400">
          <path d="M5.500 22.500H1V.8h12.500v2.500" />
          <path d="M16.500 3.800H6v22.500h18.500V11.500zM16.500 3.800v7.700h8" fill="#eee" />
          <path d="m19 16.500-6 3.200 6 3.200" />
          <g fill="#8c8c8c" stroke="none"><circle cx="19" cy="16.500" r="2.200" /><circle cx="13" cy="19.700" r="2.200" /><circle cx="19" cy="23" r="2.200" /></g>
        </svg>
      </Slot>
      <Slot><div className="flex text-[#8c8c8c]"><FaHome className="size-[17px]" /><FaHome className="-ml-[3px] size-[17px]" /></div></Slot>
      <Slot>
        <svg className="h-[18px] w-[26px]" viewBox="0 0 26 18" fill="none" stroke="#8c8c8c" strokeWidth="1.700">
          <path d="M12 15Q5 14.500 1.200 9 5 3 12.500 2.700L15 3M20 5q3 1.500 4.800 4-3.500 5.500-10 6M9 5.500q-2 4 1.500 7M18.500 1 9.500 17" />
          <path d="M16.500 8.500q1 3-2 4.500" />
        </svg>
      </Slot>
      <Slot>
        <svg className="h-[18px] w-[26px]" viewBox="0 0 26 18" fill="none" stroke="#8c8c8c" strokeWidth="1.700">
          <path d="M1.200 9Q5.500 2.600 13 2.600T24.800 9Q20.500 15.400 13 15.400T1.200 9z" />
          <circle cx="13" cy="8" r="5.200" fill="#8c8c8c" stroke="none" /><path d="M10.300 8q0-2.500 2.500-2.700" stroke="#eee" strokeWidth="1.200" />
        </svg>
      </Slot>
      <DotRule className="w-[10px]" />
      <div className="flex-1" />
      <div className="flex h-[22px] w-[294px] items-center rounded-full border border-[#a9a9a9] bg-white pl-[7px] shadow-[inset_0_1px_1px_#ddd]">
        <svg className="size-[12px]" viewBox="0 0 12 12" fill="none" stroke="#777" strokeWidth="1.200"><circle cx="4.800" cy="4.800" r="4" /><path d="m7.800 7.800 3.700 3.700" /></svg>
      </div>
      <div className="ml-[16px] mr-[7px] flex size-[22px] items-center justify-center rounded-full bg-[#5592b8] text-white"><FaQuestion className="size-[14px]" /></div>
    </div>
  );
}

const tabOn = "flex h-[21px] items-center justify-center bg-linear-to-b from-[#777] to-[#989898] text-white [text-shadow:0_1px_1px_#555]";

function ControlPanel() {
  return (
    <div className="flex w-[316px] flex-col border-r border-[#d0d0d0]">
      <div className="flex h-[18px] items-center justify-between pl-[13px] pr-[20px]">
        <span className="text-[11px] leading-none tracking-[0.200px]">Control Panel</span>
        <PanelButtons />
      </div>
      <div className="relative ml-[8px] mt-[16px] flex h-[709px] w-[290px] flex-col rounded-[4px] border-2 border-[#cdcdcd] bg-[#e6e6e6] px-px">
        <div className="absolute left-[51px] top-[-14px] flex h-[21px] w-[185px] overflow-hidden rounded-[4px] border border-[#8a8a8a] bg-linear-to-b from-white to-[#ececec] text-[12.500px] leading-none tracking-[0.250px]">
          <div className={`w-[73px] pr-[2px] ${tabOn}`}>Network</div>
          <div className="flex w-[53px] items-center justify-center pl-[2px]">Style</div>
          <div className="my-[3px] flex flex-1 items-center justify-center border-l border-[#c4c4c4] pl-[3px]">Select</div>
        </div>
        <div className="mt-[15px] flex h-[38px] w-[284px] items-center border border-[#d0d0d0] bg-white">
          <svg className="ml-px size-[33px]" viewBox="0 0 33 33">
            <defs>
              <radialGradient id="globe" cx="0.620" cy="0.400" r="0.620"><stop offset="0" stopColor="#d2d2d2" /><stop offset="0.700" stopColor="#a9a9a9" /><stop offset="1" stopColor="#777" /></radialGradient>
            </defs>
            <circle cx="16.500" cy="16.500" r="16" fill="url(#globe)" />
            <path d="M.8 15q4-1.500 8 .5l4 2-1 3-3 3-1 4-3-2Q.8 21 .8 15z" fill="#747474" opacity=".8" />
            <path d="M9 4q4-3 8-3l-2 3-4 1-4 4-3 1q1-3 5-6zM19 3l6 2 4 5-2 3-3-2-2 2-4-2 2-3-3-2z" fill="#8a8a8a" opacity=".5" />
            <path d="m14 13 5-1 3 3 6 1 1 4-4 6-4 1-3-6-4-3z" fill="#999" opacity=".35" />
          </svg>
          <svg className="ml-[2px] mt-[4px] h-[4px] w-[6px]" viewBox="0 0 6 4"><path d="M0 0h6L3 4z" /></svg>
          <div className="ml-[2px] flex h-[30px] w-[207px] items-center border-x border-[#d0d0d0] pb-[2px] pl-[5px] text-[11px] tracking-[0.100px] text-[#868686]">Type your query here...</div>
          <svg className="ml-[7px] size-[16px]" viewBox="0 0 16 16" fill="none" stroke="#000"><circle cx="6.500" cy="6.500" r="4.800" strokeWidth="2.200" /><path d="m10.200 10.200 4 4" strokeWidth="2.800" strokeLinecap="round" /></svg>
        </div>
        <div className="flex h-[19px] items-center pl-[7px] pr-[4px]">
          <svg className="h-[10px] w-[9px]" viewBox="0 0 9 10" fill="none" stroke="#8a8a8a" strokeWidth="1.200"><path d="m.5.500 4 4 4-4M.5 5l4 4 4-4" /></svg>
          <svg className="ml-[8px] h-[10px] w-[9px]" viewBox="0 0 9 10" fill="none" stroke="#000" strokeWidth="1.400"><path d="m.5 5 4-4 4 4M.5 9.500l4-4 4 4" /></svg>
          <span className="flex-1 pb-[2px] pl-[2px] text-center text-[11px] leading-none tracking-[0.200px]">2 of 10 Networks selected</span>
          <Gear className="size-[17px]" />
        </div>
        <div className="h-[634px] w-[286px] border border-[#999] border-t-[#666] bg-white px-px pt-px">
          {tree.map((group) => (
            <div key={group.name} className="border-b border-[#c6c6c6] text-[11px] leading-none">
              <div className="flex h-[25px] items-center border-b border-[#ececec] pb-px pl-[11px] pr-[7px]">
                <svg className="h-[6px] w-[10px]" viewBox="0 0 10 6"><path d="M0 0h10L5 6z" /></svg>
                <span className="ml-[11px] flex-1">{group.name}</span>
                <span className="text-[#8b8b8b]">{group.count}</span>
              </div>
              {group.rows.map(([name, nodes, edges]) => (
                <div key={name} className={`flex h-[21px] items-center pr-[7px] ${name.endsWith("Union") ? "bg-[#e0e9fd]" : ""}`}>
                  <span className={`ml-[6px] mr-[23px] size-[9px] rounded-full ${name === "OtherUnion" ? "bg-[#2f80f8]" : ""}`} />
                  <ShareSquare className="size-[14px]" />
                  <span className="ml-[6px] flex-1 whitespace-nowrap pb-px tracking-[0.050px]">{name}</span>
                  <span className="-mr-[0.500px] pb-px tracking-[0.600px] text-[#8b8b8b]">{nodes}</span>
                  <span className="-mr-[0.500px] w-[40px] pb-px text-right tracking-[0.600px] text-[#8b8b8b]">{edges}</span>
                </div>
              ))}
            </div>
          ))}
        </div>
      </div>
    </div>
  );
}

function ViewBar() {
  return (
    <div className="flex h-[30px] items-center border-y border-[#d3d3d3] text-[11px]">
      <div className="ml-[11px] grid grid-cols-3 gap-[2px]">
        {Array.from({ length: 9 }, (_, i) => <span key={i} className="h-[4.600px] w-[6px] rounded-[1px] bg-[#2e7ff2]" />)}
      </div>
      <ShareSquare className="ml-[10px] size-[19px]" />
      <span className="ml-[16px] h-[26px] w-px bg-[#d3d3d3]" />
      <svg className="ml-[17px] size-[19px]" viewBox="0 0 19 19"><rect width="19" height="19" rx="3.500" /><path d="m4.500 14.500 8-8M7.500 5h6.500v6.500" stroke="#fff" strokeWidth="2.300" fill="none" /></svg>
      <Pushpin className="ml-[16px] mb-[2px] h-[13px] w-[9px] text-[#8a8a8a]" />
      <Pushpin className="ml-[4px] mb-[2px] h-[13px] w-[9px] text-[#8a8a8a]" />
      <span className="ml-[16px] h-[26px] w-px bg-[#d3d3d3]" />
      <span className="flex-1 pl-px text-center tracking-[0.250px]">2 of 10 Views selected</span>
      <span className="h-[26px] w-px bg-[#d3d3d3]" />
      <Trash className="ml-[17px] mr-[16px] h-[19px] w-[17px]" />
      <span className="h-[26px] w-px bg-[#d3d3d3]" />
      <div className="relative ml-[24px] mr-[19px] h-[4px] w-[76px] rounded-full border border-[#8e8e8e] bg-[#b9b9b9]">
        <span className="absolute left-[19px] top-[-5px] size-[11px] rounded-full border border-[#8c8c8c] bg-white" />
      </div>
    </div>
  );
}

function TablePanel() {
  return (
    <div className="flex h-[263px] flex-col">
      <div className="flex h-[8px] justify-center pr-[2px]"><svg className="mt-[2px] h-[4px] w-[5px]" viewBox="0 0 5 4"><path d="M.5 2.500 2 .5h2.500" stroke="#777" fill="none" /></svg></div>
      <div className="flex h-[22px] items-center justify-between pb-[2px] pl-[12px] pr-[11px]">
        <span className="text-[11px] leading-none tracking-[0.150px]">Table Panel</span>
        <PanelButtons />
      </div>
      <div className="relative ml-[7px] mt-[4px] flex h-[209px] w-[1195px] flex-col rounded-[5px] border-2 border-[#cbcbcb] bg-[#e6e6e6]">
        <div className="flex h-[40px] items-center pl-[12px] pt-[4px]">
          <Gear className="size-[19px]" />
          <svg className="ml-[18px] h-[19px] w-[21px]" viewBox="0 0 21 19" fill="none" stroke="#000"><rect x=".7" y=".7" width="19.600" height="17.600" rx="1" strokeWidth="1.400" /><path d="M0 2h21" strokeWidth="2.400" /><path d="M10.500 2v16" strokeWidth="1.400" /></svg>
          <svg className="ml-[19px] mb-[2px] size-[18px]" viewBox="0 0 18 18"><path d="M6.300 1.200Q6.300.3 7.200.3h3.600q.9 0 .9.900v5.100h5.100q.9 0 .9.900v3.600q0 .9-.9.900h-5.100v5.100q0 .9-.9.900H7.200q-.9 0-.9-.9v-5.100H1.200q-.9 0-.9-.9V7.200q0-.9.900-.9h5.100z" /></svg>
          <Trash className="ml-[20px] h-[20px] w-[18px]" />
          <svg className="ml-[19px] h-[11px] w-[21px]" viewBox="0 0 21 11" fill="none" stroke="#8c8c8c"><rect x=".6" y="1" width="11" height="8.500" /><path d="M0 4h12M0 6.700h12M4 1v9M8 1v9" /><circle cx="15.500" cy="5.300" r="4.800" fill="#8c8c8c" stroke="none" /><path d="m13.700 3.500 3.600 3.600m0-3.600-3.600 3.600" stroke="#e6e6e6" strokeWidth="1.500" /></svg>
          <span className="ml-[11px] w-[31px] whitespace-nowrap font-['Liberation_Serif',serif] text-[20px] italic leading-none tracking-[0.300px] text-[#888]">f(x)</span>
          <svg className="ml-[11px] mb-[2px] h-[20px] w-[22px]" viewBox="0 0 22 20"><path d="M8.500 3H4.200Q1.200 3 1.200 6v9.500q0 3 3 3h9.600q3 0 3-3V13" fill="none" stroke="#000" strokeWidth="1.800" /><path d="M13.500 0 21.500 6l-8 6V8.600Q6.500 8 6 14 3.500 10.500 5.300 7 7.500 3.500 13.500 3.400z" /></svg>
        </div>
        <div className="ml-px h-[153px] w-[1190px] border border-[#999] border-t-[#666] bg-white pl-px">
          <div className={`${cols} h-[23px] w-[1171px] border-b border-[#d0d0d0] bg-[#f3f3f3]`}>
            {columns.map((c, i) => (
              <div key={c} className={`relative mt-[3px] flex h-[18px] items-center pb-px text-[11px] leading-none tracking-[0.120px] ${i === 9 ? "justify-end pr-px" : "justify-center border-r border-[#cfcfcf]"}`}>
                <Hierarchy className="absolute left-[4px] top-[1px] h-[11px] w-[12px] text-[#8b8b8b]" />
                {c}
              </div>
            ))}
          </div>
          <div className="flex h-[113px] border-b border-[#dcdcdc]">
            <div className="w-[1171px] text-[11px] leading-[16px] tracking-[0.550px]">
              {rows.map((r) => (
                <div key={r[0]} className={`${cols} h-[16px]`}>
                  {r.map((v, i) => (
                    <span key={i} className={i < 4 ? "pl-[8px]" : i === 9 ? "pr-px text-right" : "pr-[8px] text-right"}>{v}</span>
                  ))}
                </div>
              ))}
            </div>
            <div className="w-[15px] bg-linear-to-r from-[#efefef] to-white pl-[4px] pt-[2px]"><div className="h-[31px] w-[8px] rounded-full bg-[#c1c1c1]" /></div>
          </div>
          <div className="h-[14px] w-[1171px] bg-linear-to-b from-[#f1f1f1] to-white pl-px pt-[3px]"><div className="h-[8px] w-[871px] rounded-full bg-[#c1c1c1]" /></div>
        </div>
        <div className="absolute bottom-[-17px] left-[448px] flex h-[21px] w-[295px] overflow-hidden rounded-[4px] border border-[#8a8a8a] bg-linear-to-b from-white to-[#ececec] text-[12.500px] leading-none tracking-[0.500px]">
          <div className={`w-[91px] pr-px ${tabOn}`}>Node Table</div>
          <div className="flex w-[91px] items-center justify-center pl-[2px]">Edge Table</div>
          <div className="my-[3px] flex flex-1 items-center justify-center border-l border-[#c4c4c4] pl-[3px]">Network Table</div>
        </div>
      </div>
    </div>
  );
}

function StatusBar() {
  return (
    <div className="flex h-[35px] items-center border-t border-[#d0d0d0] pl-[10px] pr-[10px]">
      <div className="flex h-[20px] w-[29px] items-center justify-center border border-[#a5a5a5] bg-linear-to-b from-white to-[#ededed]"><FaCloud className="size-[15px]" /></div>
      <div className="ml-[14px] flex h-[20px] w-[26px] items-center justify-center border border-[#a5a5a5] bg-linear-to-b from-white to-[#ededed]">
        <svg className="size-[13px]" viewBox="0 0 13 13"><circle cx="6.500" cy="6.500" r="6.300" fill="#cf2a1b" /><path d="M3 5.300h7v2.400H3z" fill="#fff" /></svg>
      </div>
      <div className="flex-1" />
      <div className="flex h-[24px] w-[75px] items-center border border-[#a5a5a5] bg-linear-to-b from-white to-[#ededed] pl-[7px] text-[11px] tracking-[0.050px]">
        <span className="mr-[5px] size-[12px] rounded-full bg-[#0c8a35]" />Memory
      </div>
    </div>
  );
}

export default function App() {
  return (
    <div className="flex h-[853px] w-[1526px] flex-col overflow-hidden bg-[#eeeeee] font-['Noto_Sans',sans-serif] text-black">
      <TitleBar />
      <Toolbar />
      <div className="flex h-[755px]">
        <ControlPanel />
        <div className="flex w-[1210px] flex-col">
          <div className="flex h-[462px]">
            <div className="ml-[3px] mt-[2px] grid w-[1188px] grid-cols-5 content-start gap-[2px]">
              {graphs.map((g) => <Tile key={g.title} g={g} />)}
            </div>
            <div className="ml-[3px] flex-1 border-x border-[#dedede] bg-linear-to-r from-[#f2f2f2] to-[#fbfbfb]" />
          </div>
          <ViewBar />
          <TablePanel />
        </div>
      </div>
      <StatusBar />
    </div>
  );
}
